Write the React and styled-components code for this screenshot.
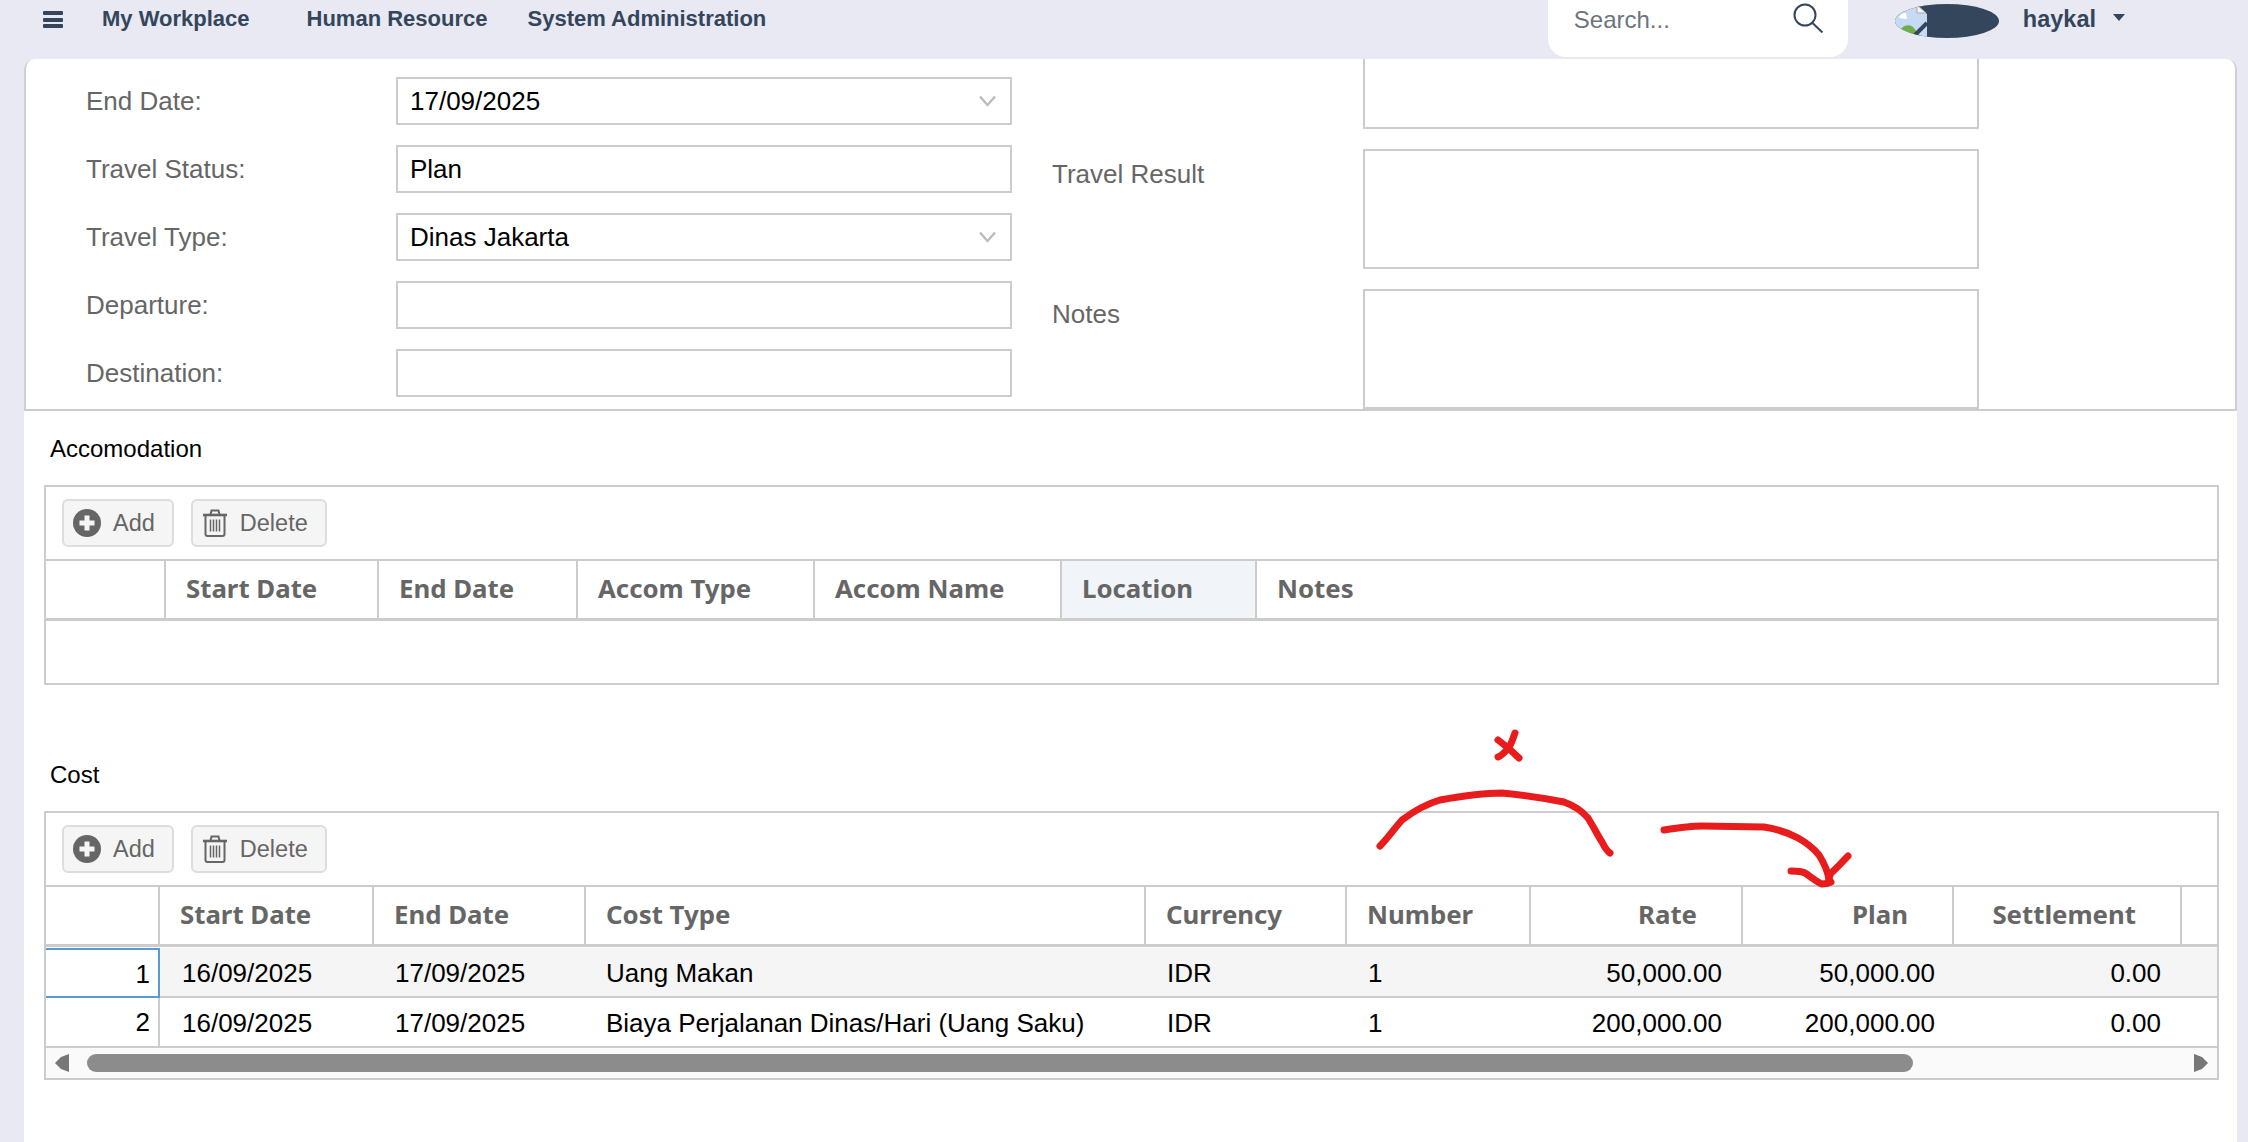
import React from 'react'
import styled, { createGlobalStyle } from 'styled-components'

const GlobalStyle = createGlobalStyle`
  html, body {
    margin: 0;
    height: 100%;
    overflow: hidden;
    background: #e8e9f2;
    font-family: "Liberation Sans", Arial, sans-serif;
  }
  * { box-sizing: border-box; }
`

const accomCols = '120px 213px 199px 237px 247px 195px 1fr'
const costCols = '114px 214px 212px 560px 201px 184px 212px 211px 228px 1fr'

const accomHeaders = [
  { label: '' },
  { label: 'Start Date' },
  { label: 'End Date' },
  { label: 'Accom Type' },
  { label: 'Accom Name' },
  { label: 'Location', active: true },
  { label: 'Notes', last: true },
]

const costHeaders = [
  { label: '' },
  { label: 'Start Date' },
  { label: 'End Date' },
  { label: 'Cost Type' },
  { label: 'Currency' },
  { label: 'Number' },
  { label: 'Rate', right: true },
  { label: 'Plan', right: true },
  { label: 'Settlement', right: true },
  { label: '', last: true },
]

const costRows = [
  ['16/09/2025', '17/09/2025', 'Uang Makan', 'IDR', '1', '50,000.00', '50,000.00', '0.00'],
  ['16/09/2025', '17/09/2025', 'Biaya Perjalanan Dinas/Hari (Uang Saku)', 'IDR', '1', '200,000.00', '200,000.00', '0.00'],
]

export default function App() {
  return (
    <>
      <GlobalStyle />
      <TopBar>
        <Burger><span /><span /><span /></Burger>
        <NavLink $left={39}>My Workplace</NavLink>
        <NavLink $left={57}>Human Resource</NavLink>
        <NavLink $left={40}>System Administration</NavLink>
        <SearchBox>
          <SearchText>Search...</SearchText>
          <SearchIcon />
        </SearchBox>
        <Avatar />
        <UserName>haykal</UserName>
        <Caret />
      </TopBar>

      <Page>
        <FormPanel>
          <FormColumn>
            <Field label="End Date:" value="17/09/2025" select />
            <Field label="Travel Status:" value="Plan" />
            <Field label="Travel Type:" value="Dinas Jakarta" select />
            <Field label="Departure:" />
            <Field label="Destination:" />
          </FormColumn>
          <NotesColumn>
            <NoteRow>
              <NoteLabel />
              <NoteBox $cut />
            </NoteRow>
            <NoteRow>
              <NoteLabel>Travel Result</NoteLabel>
              <NoteBox />
            </NoteRow>
            <NoteRow>
              <NoteLabel>Notes</NoteLabel>
              <NoteBox />
            </NoteRow>
          </NotesColumn>
        </FormPanel>

        <Section $top={24}>
          <SectionTitle>Accomodation</SectionTitle>
          <DataGrid>
            <GridToolbar />
            <HeaderRow $cols={accomCols}>
              {accomHeaders.map((h, i) => (
                <HeaderCell key={i} $active={h.active} $last={h.last}>{h.label}</HeaderCell>
              ))}
            </HeaderRow>
            <EmptyBody />
          </DataGrid>
        </Section>

        <Section $top={76}>
          <SectionTitle>Cost</SectionTitle>
          <DataGrid>
            <GridToolbar />
            <HeaderRow $cols={costCols}>
              {costHeaders.map((h, i) => (
                <HeaderCell key={i} $right={h.right} $last={h.last}>{h.label}</HeaderCell>
              ))}
            </HeaderRow>
            {costRows.map((row, i) => (
              <BodyRow key={i} $cols={costCols} $shaded={i === 0}>
                <IndexCell $current={i === 0}>{i + 1}</IndexCell>
                <BodyCell $pad={22}>{row[0]}</BodyCell>
                <BodyCell>{row[1]}</BodyCell>
                <BodyCell $pad={20}>{row[2]}</BodyCell>
                <BodyCell>{row[3]}</BodyCell>
                <BodyCell>{row[4]}</BodyCell>
                <BodyCell $right>{row[5]}</BodyCell>
                <BodyCell $right $end={19}>{row[6]}</BodyCell>
                <BodyCell $right>{row[7]}</BodyCell>
                <BodyCell />
              </BodyRow>
            ))}
            <ScrollBar>
              <ScrollArrow viewBox="0 0 14 18"><path d="M14 0 L14 18 L6 15 L0 9 L6 3 Z" /></ScrollArrow>
              <ScrollTrack><ScrollThumb /></ScrollTrack>
              <ScrollArrow viewBox="0 0 14 18"><path d="M0 0 L0 18 L8 15 L14 9 L8 3 Z" /></ScrollArrow>
            </ScrollBar>
          </DataGrid>
        </Section>
      </Page>

      <Scribble viewBox="0 0 2248 1142">
        <path d="M1380 846 C1388 838 1394 829 1402 820 C1414 811 1426 804 1440 800 C1462 796 1482 793 1502 793 C1524 795 1544 798 1564 802 C1575 806 1582 811 1588 818 C1593 826 1597 834 1602 842 C1605 848 1607 851 1610 853" />
        <path d="M1498 740 C1505 745 1512 751 1519 758" />
        <path d="M1515 733 C1513 738 1512 743 1509 747 C1506 751 1503 755 1498 757" />
        <path d="M1664 830 C1677 828 1690 826 1702 826 L1764 827 C1777 829 1787 832 1798 838 C1807 843 1814 849 1819 855 C1824 863 1828 872 1829 880" />
        <path d="M1791 871 C1797 871 1801 871 1805 873 C1811 877 1817 882 1822 884 C1826 884 1829 883 1831 882" />
        <path d="M1848 856 C1842 862 1837 868 1831 873 C1829 876 1829 878 1829 881" />
      </Scribble>
    </>
  )
}

function Field({ label, value, select }) {
  return (
    <FieldRow>
      <FieldLabel>{label}</FieldLabel>
      <FieldBox>
        {value}
        {select && (
          <Chevron viewBox="0 0 17 12"><polyline points="1,1.5 8.5,10 16,1.5" /></Chevron>
        )}
      </FieldBox>
    </FieldRow>
  )
}

function GridToolbar() {
  return (
    <Toolbar>
      <ToolButton>
        <svg width="28" height="28" viewBox="0 0 28 28">
          <circle cx="14" cy="14" r="14" fill="#666" />
          <path d="M14 6.5 V21.5 M6.5 14 H21.5" stroke="#f5f5f5" strokeWidth="5" />
        </svg>
        Add
      </ToolButton>
      <ToolButton>
        <svg width="26" height="28" viewBox="0 0 26 28" fill="none" stroke="#666">
          <path d="M1 6 H25" strokeWidth="2.6" />
          <path d="M8.5 5.5 L9.5 1.5 H16.5 L17.5 5.5" strokeWidth="2" />
          <path d="M3.5 6.5 V25 Q3.5 27 5.5 27 H20.5 Q22.5 27 22.5 25 V6.5" strokeWidth="2" />
          <path d="M8.5 10.5 V22.5 M11.5 10.5 V22.5 M14.5 10.5 V22.5 M17.5 10.5 V22.5" strokeWidth="1.5" />
        </svg>
        Delete
      </ToolButton>
    </Toolbar>
  )
}

function SearchIcon() {
  return (
    <SearchSvg viewBox="0 0 31 30" fill="none" stroke="#34465c" strokeWidth="2">
      <circle cx="12" cy="12" r="10.5" />
      <path d="M19.5 20 L29.5 29.5" />
    </SearchSvg>
  )
}

function Avatar() {
  return (
    <AvatarOval>
      <svg width="104" height="34" viewBox="0 0 104 34">
        <rect x="0" y="0" width="32" height="34" fill="#c6daf4" />
        <path d="M4 14 Q5 9 11 9 L12 15 Z" fill="#fff" />
        <path d="M21 0 L32 10 V0 Z" fill="#34465c" />
        <path d="M22 1 L31 9 H22 Z" fill="#f4f4f4" stroke="#a9a9a9" strokeWidth="1" />
        <path d="M3 30 C6 22 13 19 18 23 L27 34 H3 Z" fill="#6fad4a" />
        <path d="M17 34 L32 19" stroke="#34465c" strokeWidth="4" />
      </svg>
    </AvatarOval>
  )
}

const TopBar = styled.header`
  display: flex;
  align-items: flex-start;
  height: 59px;
  padding: 0 123px 0 43px;
  background: #e8e9f2;
  color: #34465c;
`

const Burger = styled.div`
  display: flex;
  flex-direction: column;
  gap: 2.5px;
  width: 20px;
  margin-top: 11px;

  span {
    display: block;
    height: 4px;
    background: #34465c;
    border-radius: 1px;
  }
`

const NavLink = styled.a`
  margin-left: ${p => p.$left}px;
  font-size: 22px;
  font-weight: 700;
  line-height: 38px;
  white-space: nowrap;
`

const SearchBox = styled.div`
  display: flex;
  justify-content: space-between;
  width: 300px;
  height: 57px;
  margin-left: auto;
  padding: 3px 24px 0 26px;
  background: #fff;
  border-radius: 0 0 18px 18px;
`

const SearchText = styled.span`
  font-size: 24px;
  line-height: 34px;
  color: #6c757d;
`

const SearchSvg = styled.svg`
  width: 31px;
  height: 30px;
`

const AvatarOval = styled.div`
  width: 104px;
  height: 34px;
  margin: 4px 0 0 47px;
  background: #34465c;
  border-radius: 50%;
  overflow: hidden;

  svg { display: block; }
`

const UserName = styled.span`
  margin-left: 24px;
  font-size: 23.5px;
  font-weight: 700;
  line-height: 38px;
`

const Caret = styled.span`
  width: 0;
  height: 0;
  margin: 14px 0 0 17px;
  border-left: 6.5px solid transparent;
  border-right: 6.5px solid transparent;
  border-top: 7px solid #34465c;
`

const Page = styled.main`
  margin: 0 11px 0 24px;
  height: calc(100vh - 59px);
  background: #fff;
  border-radius: 10px 10px 0 0;
`

const FormPanel = styled.section`
  display: flex;
  height: 352px;
  padding-left: 60px;
  background: #fff;
  border: 2px solid #cfd0d6;
  border-width: 0 2px 2px;
  border-bottom-color: #ccc;
  border-radius: 10px 10px 0 0;
`

const FormColumn = styled.div`
  display: flex;
  flex-direction: column;
  gap: 20px;
  width: 926px;
  padding-top: 18px;
`

const FieldRow = styled.div`
  display: flex;
  align-items: center;
  height: 48px;
`

const FieldLabel = styled.label`
  width: 310px;
  padding-top: 1px;
  font-size: 26px;
  color: #666;
`

const FieldBox = styled.div`
  display: flex;
  align-items: center;
  justify-content: space-between;
  width: 616px;
  height: 48px;
  padding: 0 14px 0 12px;
  font-size: 26px;
  color: #000;
  border: 2px solid #ccc;
`

const Chevron = styled.svg`
  width: 17px;
  height: 12px;
  fill: none;
  stroke: #bbb;
  stroke-width: 2.4;
`

const NotesColumn = styled.div`
  display: flex;
  flex-direction: column;
  gap: 20px;
  margin-left: 40px;
`

const NoteRow = styled.div`
  display: flex;
  align-items: flex-start;
`

const NoteLabel = styled.label`
  width: 311px;
  padding-top: 9px;
  font-size: 26px;
  line-height: 32px;
  color: #666;
`

const NoteBox = styled.div`
  width: 616px;
  height: ${p => (p.$cut ? 70 : 120)}px;
  border: 2px solid #ccc;
  border-top-width: ${p => (p.$cut ? 0 : 2)}px;
`

const Section = styled.section`
  padding: ${p => p.$top}px 18px 0 20px;
`

const SectionTitle = styled.h3`
  margin: 0 0 22px 6px;
  font-size: 24px;
  font-weight: 400;
  line-height: 28px;
  color: #000;
`

const DataGrid = styled.div`
  border: 2px solid #ccc;
`

const Toolbar = styled.div`
  display: flex;
  gap: 17px;
  padding: 12px 16px;
  border-bottom: 2px solid #ccc;
`

const ToolButton = styled.button`
  display: flex;
  align-items: center;
  gap: 12px;
  height: 48px;
  padding: 0 17px 0 9px;
  font-family: inherit;
  font-size: 23.5px;
  color: #666;
  background: #f5f5f5;
  border: 2px solid #ddd;
  border-radius: 6px;
`

const HeaderRow = styled.div`
  display: grid;
  grid-template-columns: ${p => p.$cols};
  height: 60px;
  border-bottom: 3px solid #ccc;
`

const HeaderCell = styled.div`
  display: flex;
  align-items: center;
  justify-content: ${p => (p.$right ? 'flex-end' : 'flex-start')};
  padding: 0 ${p => (p.$right ? 44 : 20)}px 3px 20px;
  font-family: "Noto Sans", "Liberation Sans", sans-serif;
  font-size: 25.8px;
  font-weight: 700;
  color: #666;
  background: ${p => (p.$active ? '#f1f5f9' : 'transparent')};
  border-right: ${p => (p.$last ? 'none' : '2px solid #ccc')};
`

const EmptyBody = styled.div`
  height: 62px;
`

const BodyRow = styled.div`
  display: grid;
  grid-template-columns: ${p => p.$cols};
  height: 50px;
  margin-top: ${p => (p.$shaded ? 1 : 0)}px;
  background: ${p => (p.$shaded ? '#f5f5f5' : '#fff')};
  border-bottom: 2px solid #ccc;
`

const BodyCell = styled.div`
  padding: 3px ${p => (p.$right ? p.$end ?? 21 : 0)}px 0 ${p => p.$pad ?? 21}px;
  font-size: 26px;
  line-height: 45px;
  color: #000;
  text-align: ${p => (p.$right ? 'right' : 'left')};
  white-space: nowrap;
`

const IndexCell = styled.div`
  padding: 2px 8px 0 0;
  font-size: 26px;
  line-height: 44px;
  text-align: right;
  color: #000;
  background: #fff;
  border-right: 2px solid ${p => (p.$current ? '#5b9bd5' : '#ccc')};
  border-top: ${p => (p.$current ? '2px solid #5b9bd5' : 'none')};
  border-bottom: ${p => (p.$current ? '2px solid #5b9bd5' : 'none')};
`

const ScrollBar = styled.div`
  display: flex;
  align-items: center;
  height: 30px;
  padding: 0 9px;
  background: #fafafa;
`

const ScrollArrow = styled.svg`
  flex: none;
  width: 14px;
  height: 18px;
  fill: #777;
`

const ScrollTrack = styled.div`
  flex: 1;
  padding: 0 281px 0 18px;
`

const ScrollThumb = styled.div`
  height: 18px;
  background: #8c8c8c;
  border-radius: 9px;
`

const Scribble = styled.svg`
  position: absolute;
  top: 0;
  left: 0;
  width: 2248px;
  height: 1142px;
  fill: none;
  stroke: #e81c1c;
  stroke-width: 7;
  stroke-linecap: round;
  stroke-linejoin: round;
  pointer-events: none;
`
